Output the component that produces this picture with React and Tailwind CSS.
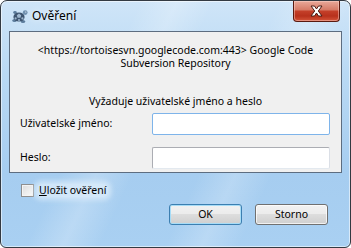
import React, { useState } from 'react';

const TurtleIcon = () => (
    <svg width="17" height="15" viewBox="0 0 17 15">
        {/* legs */}
        <ellipse cx="3.5" cy="11.5" rx="2.2" ry="1.6" fill="#5c7c9c" />
        <ellipse cx="12" cy="12.5" rx="2.2" ry="1.6" fill="#5c7c9c" />
        <ellipse cx="4" cy="3.5" rx="1.8" ry="1.4" fill="#5c7c9c" />
        {/* head */}
        <circle cx="14.2" cy="3.6" r="2.4" fill="#6f8fae" />
        <circle cx="14.8" cy="3" r="0.6" fill="#fff" />
        {/* shell */}
        <ellipse cx="8" cy="8" rx="5.6" ry="4.6" fill="#3e5570" />
        <path d="M8 4.6 L10.2 6.2 L9.5 8.8 L6.5 8.8 L5.8 6.2 Z" fill="#9fb7cf" />
        <circle cx="4.6" cy="9.4" r="1.1" fill="#9fb7cf" />
        <circle cx="11.4" cy="9.4" r="1.1" fill="#9fb7cf" />
        <circle cx="8" cy="11" r="1" fill="#9fb7cf" />
    </svg>
);

const CloseButton = () => (
    <div className="absolute top-0 right-[10px] w-[47px] h-[21px] rounded-b-[4px] border border-t-0 border-[#5a1a10] bg-[linear-gradient(to_bottom,#e9a99a_0%,#d67a66_45%,#c4402a_50%,#b8311c_75%,#d4553a_100%)] shadow-[inset_0_0_0_1px_rgba(255,220,210,0.45)] flex items-center justify-center">
        <svg width="15" height="12" viewBox="0 0 15 12">
            <path
                d="M2 1 H5.5 L7.5 4 L9.5 1 H13 L9.3 6 L13 11 H9.5 L7.5 8 L5.5 11 H2 L5.7 6 Z"
                fill="#ffffff"
                stroke="#4a1c14"
                strokeWidth="1"
                strokeLinejoin="round"
            />
        </svg>
    </div>
);

const WinButton = ({ children, isDefault }) => (
    <button
        type="button"
        className={
            isDefault
                ? 'w-[73px] h-[21px] rounded-[3px] border border-[#3c7fb1] bg-[linear-gradient(to_bottom,#f2f2f2_0%,#ebebeb_50%,#dddddd_50%,#cfcfcf_100%)] shadow-[inset_0_0_0_1px_#a6dcf7] text-[10.5px] text-black'
                : 'w-[73px] h-[21px] rounded-[3px] border border-[#707070] bg-[linear-gradient(to_bottom,#f2f2f2_0%,#ebebeb_50%,#dddddd_50%,#cfcfcf_100%)] shadow-[inset_0_0_0_1px_rgba(255,255,255,0.7)] text-[10.5px] text-black'
        }
    >
        {children}
    </button>
);

export default function App() {
    const [remember, setRemember] = useState(false);

    return (
        <div className="w-[351px] h-[248px] bg-white font-['Noto_Sans',sans-serif]">
            <div className="relative w-full h-full rounded-t-[7px] rounded-b-[6px] border border-[#333a42] overflow-hidden bg-[linear-gradient(115deg,rgba(255,255,255,0)_30%,rgba(255,255,255,0.22)_38%,rgba(255,255,255,0)_46%,rgba(255,255,255,0)_60%,rgba(255,255,255,0.2)_68%,rgba(255,255,255,0)_76%),linear-gradient(to_bottom,#cfe5f8_0%,#b9d9f4_30%,#a6cdf0_70%,#a9d0f2_100%)] shadow-[inset_0_0_0_1px_rgba(255,255,255,0.55)]">
                {/* title bar */}
                <div className="h-[30px] flex items-center pl-[10px] gap-[4px]">
                    <TurtleIcon />
                    <span className="text-[12px] text-black [text-shadow:0_0_6px_rgba(255,255,255,0.9)]">Ověření</span>
                </div>
                <CloseButton />

                {/* client area */}
                <div className="mx-[8px] h-[142px] bg-[#f0f0f0] border border-[#5d6d80] flex flex-col text-[10.5px] text-black">
                    <div className="pt-[12px] text-center leading-[13px]">
                        <div>&lt;https://tortoisesvn.googlecode.com:443&gt; Google Code</div>
                        <div>Subversion Repository</div>
                    </div>
                    <div className="mt-[24px] text-center leading-[14px]">Vyžaduje uživatelské jméno a heslo</div>
                    <div className="mt-[5px] flex items-center justify-between pl-[10px] pr-[11px]">
                        <span>Uživatelské jméno:</span>
                        <input className="w-[178px] h-[22px] bg-white border border-[#7eb4ea] rounded-[2px] outline-none px-1" />
                    </div>
                    <div className="mt-[12px] flex items-center justify-between pl-[10px] pr-[11px]">
                        <span>Heslo:</span>
                        <input type="password" className="w-[178px] h-[22px] bg-white border border-[#abadb3] border-b-[#e3e9ef] border-r-[#dbdfe6] rounded-[2px] outline-none px-1" />
                    </div>
                </div>

                {/* glass footer */}
                <div className="px-[20px] pt-[11px]">
                    <label className="h-[13px] flex items-center gap-[3px] text-[10.5px] text-black">
                        <input
                            type="checkbox"
                            checked={remember}
                            onChange={() => setRemember(!remember)}
                            className="appearance-none shrink-0 w-[13px] h-[13px] border border-[#8f8f8f] bg-[linear-gradient(135deg,#dcdcdc,#fbfbfb)] shadow-[inset_0_0_0_1px_#f4f4f4]"
                        />
                        <span className="px-[2px] leading-[13px] rounded-[4px] bg-[rgba(222,238,251,0.75)] shadow-[0_0_5px_3px_rgba(222,238,251,0.75)]">
                            <span className="underline">U</span>ložit ověření
                        </span>
                    </label>
                    <div className="mt-[7px] flex justify-end gap-[13px] pr-[2px]">
                        <WinButton isDefault>OK</WinButton>
                        <WinButton>Storno</WinButton>
                    </div>
                </div>
            </div>
        </div>
    );
}
